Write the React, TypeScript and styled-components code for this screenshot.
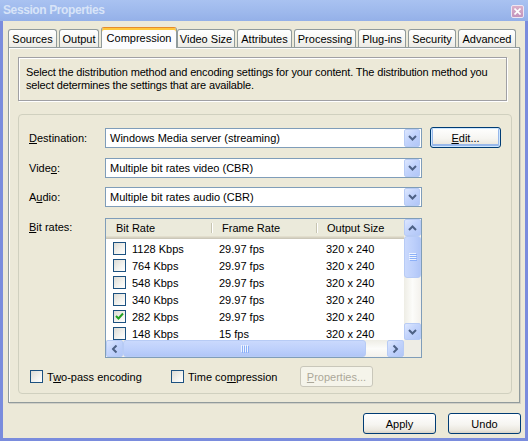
import styled, { createGlobalStyle } from "styled-components";

const GlobalStyle = createGlobalStyle`
  html, body {
    margin: 0;
    padding: 0;
  }
  body {
    font-family: "Liberation Sans", Arial, sans-serif;
    font-size: 11px;
    color: #000;
    background: #ece9d8;
  }
`;

const Window = styled.div`
  width: 528px;
  height: 441px;
  display: flex;
  flex-direction: column;
  background: #7a8cdd;
  overflow: hidden;
`;

const TitleBar = styled.div`
  height: 21px;
  flex: none;
  display: flex;
  align-items: center;
  justify-content: space-between;
  padding: 0 4px 0 3px;
  background: linear-gradient(180deg, #a9c2f1 0%, #9db8ec 60%, #94b0e8 100%);
`;

const Title = styled.span`
  color: #d8e4f8;
  font-weight: bold;
  font-size: 12px;
  letter-spacing: -0.4px;
  margin-top: -1px;
`;

const CloseBox = styled.div`
  width: 13px;
  height: 13px;
  box-sizing: border-box;
  margin-top: 1px;
  border: 1px solid #efe6f2;
  border-radius: 2px;
  background: linear-gradient(180deg, #dab0c9, #c394bd);
  display: flex;
  align-items: center;
  justify-content: center;
`;

const Body = styled.div`
  flex: 1;
  margin: 0 3px 3px;
  background: #ece9d8;
  padding: 6px 5px 0 5px;
  display: flex;
  flex-direction: column;
`;

const TabRow = styled.div`
  display: flex;
  height: 21px;
  position: relative;
  z-index: 1;
`;

const Tab = styled.div<{ $active?: boolean; $w: number }>`
  box-sizing: border-box;
  width: ${(p) => p.$w}px;
  height: ${(p) => (p.$active ? 21 : 18)}px;
  margin-top: ${(p) => (p.$active ? 0 : 2)}px;
  margin-right: ${(p) => (p.$active ? 0 : 2)}px;
  border: 1px solid #919b9c;
  border-bottom: none;
  border-top-color: ${(p) => (p.$active ? "#e68b2c" : "#919b9c")};
  border-radius: 3px 3px 0 0;
  background: ${(p) =>
    p.$active ? "#fcfcfe" : "linear-gradient(180deg, #ffffff 0%, #f7f7f4 50%, #ecebe6 100%)"};
  box-shadow: ${(p) => (p.$active ? "inset 0 2px 0 #ffc83c" : "none")};
  display: flex;
  align-items: center;
  justify-content: center;
  padding-top: ${(p) => (p.$active ? 0 : 1)}px;
  white-space: nowrap;
`;

const Panel = styled.div`
  margin-top: -1px;
  height: 356px;
  box-sizing: border-box;
  border: 1px solid #919b9c;
  box-shadow: inset 1px 1px 0 #fcfcfe, 1px 1px 0 #d0cfc6;
  padding: 9px 7px 0 9px;
`;

const DescBox = styled.div`
  height: 44px;
  box-sizing: border-box;
  margin-right: 5px;
  padding: 8px 7px;
  line-height: 13px;
  letter-spacing: -0.15px;
  white-space: nowrap;
  border: 1px solid #a0a0a4;
  box-shadow: inset 1px 1px 0 #ffffff, 1px 1px 0 #ffffff;
`;

const GroupBox = styled.div`
  margin-top: 13px;
  height: 280px;
  box-sizing: border-box;
  border: 1px solid #d0d0bf;
  border-radius: 4px;
  padding: 12px 10px 0;
`;

const FieldRow = styled.div<{ $top?: number }>`
  display: flex;
  align-items: center;
  height: ${(p) => (p.$top === undefined ? 21 : 20)}px;
  margin-top: ${(p) => p.$top ?? 0}px;
`;

const Label = styled.div<{ $pad?: number }>`
  width: 76px;
  flex: none;
  padding-top: ${(p) => p.$pad ?? 0}px;
`;

const Combo = styled.div`
  width: 317px;
  height: 20px;
  box-sizing: border-box;
  border: 1px solid #7f9db9;
  background: #fff;
  display: flex;
  align-items: center;
  padding: 0 1px 0 4px;
`;

const ComboText = styled.span`
  flex: 1;
`;

const ArrowBtn = styled.div<{ $w?: number; $h?: number }>`
  width: ${(p) => p.$w ?? 16}px;
  height: ${(p) => p.$h ?? 16}px;
  flex: none;
  box-sizing: border-box;
  border: 1px solid #b7cbf5;
  border-radius: 2px;
  background: linear-gradient(135deg, #dde7fe 0%, #c3d4fc 45%, #b1c6f7 100%);
  display: flex;
  align-items: center;
  justify-content: center;
`;

const XpButton = styled.div<{ $default?: boolean; $disabled?: boolean; $w: number }>`
  width: ${(p) => p.$w}px;
  height: 21px;
  box-sizing: border-box;
  flex: none;
  border: 1px solid ${(p) => (p.$disabled ? "#c9c7ba" : "#003c74")};
  border-radius: 3px;
  color: ${(p) => (p.$disabled ? "#aca899" : "#000")};
  background: ${(p) =>
    p.$disabled
      ? "#f5f4ea"
      : "linear-gradient(180deg, #ffffff 0%, #f6f5f1 55%, #ebe8df 85%, #d8d3c7 100%)"};
  box-shadow: ${(p) =>
    p.$default ? "inset 0 0 0 1px #cee7ff, inset 0 -1px 0 2px #98b8ea" : "none"};
  display: flex;
  align-items: center;
  justify-content: center;
  margin-left: ${(p) => (p.$default ? 8 : 0)}px;
`;

const ListRow = styled.div`
  display: flex;
  align-items: flex-start;
  margin-top: 11px;
`;

const ListBox = styled.div`
  width: 317px;
  height: 140px;
  box-sizing: border-box;
  border: 1px solid #7f9db9;
  background: #fff;
  display: grid;
  grid-template-columns: 298px 17px;
  grid-template-rows: 121px 17px;
`;

const ListContent = styled.div`
  overflow: hidden;
`;

const Columns = "106px 105px 87px";

const Header = styled.div`
  display: grid;
  grid-template-columns: ${Columns};
  height: 20px;
  box-sizing: border-box;
  background: #ebeadb;
  box-shadow: inset 0 -1px 0 #cbc7b8, inset 0 -2px 0 #d6d2c2, inset 0 -3px 0 #e2decd;
  margin-bottom: 1px;
`;

const HeadCell = styled.div<{ $last?: boolean }>`
  display: flex;
  align-items: center;
  padding: 0 0 2px 10px;
  position: relative;
  &::after {
    content: "";
    display: ${(p) => (p.$last ? "none" : "block")};
    position: absolute;
    right: 0;
    top: 4px;
    bottom: 6px;
    width: 1px;
    background: #c7c5b2;
    box-shadow: 1px 0 0 #fff;
  }
`;

const DataRow = styled.div`
  display: grid;
  grid-template-columns: ${Columns};
  height: 17px;
  align-items: center;
`;

const Cell = styled.div<{ $pad: number }>`
  display: flex;
  align-items: center;
  gap: 6px;
  padding-left: ${(p) => p.$pad}px;
  white-space: nowrap;
`;

const Check = styled.div`
  width: 13px;
  height: 13px;
  box-sizing: border-box;
  flex: none;
  border: 1px solid #1c5180;
  background: linear-gradient(135deg, #dcdbd5 0%, #f3f3ef 60%, #ffffff 100%);
  display: flex;
  align-items: center;
  justify-content: center;
`;

const VScroll = styled.div`
  display: flex;
  flex-direction: column;
  background: linear-gradient(90deg, #eeede5, #fcfcfa 50%, #f3f1ec);
`;

const HScroll = styled.div`
  display: flex;
  background: linear-gradient(180deg, #eeede5, #fcfcfa 50%, #f3f1ec);
`;

const Thumb = styled.div<{ $vertical?: boolean; $size: number }>`
  ${(p) => (p.$vertical ? `height: ${p.$size}px;` : `width: ${p.$size}px;`)}
  flex: none;
  box-sizing: border-box;
  border: 1px solid #b7cbf5;
  border-radius: 3px;
  background: ${(p) =>
    p.$vertical
      ? "linear-gradient(90deg, #cad9fd 0%, #bccffb 60%, #b1c6f7 100%)"
      : "linear-gradient(180deg, #cad9fd 0%, #bccffb 60%, #b1c6f7 100%)"};
  display: flex;
  align-items: center;
  justify-content: center;
`;

const Track = styled.div`
  flex: 1;
`;

const Corner = styled.div`
  background: #eeede5;
`;

const OptionRow = styled.div`
  display: flex;
  align-items: center;
  height: 21px;
  margin-top: 8px;
  padding-left: 1px;
`;

const Option = styled.label<{ $w: number }>`
  width: ${(p) => p.$w}px;
  flex: none;
  display: flex;
  align-items: center;
  gap: 4px;
  white-space: nowrap;
`;

const ButtonRow = styled.div`
  display: flex;
  justify-content: flex-end;
  gap: 12px;
  margin: 10px -1px 0 0;
`;

function Chevron({ dir }: { dir: "up" | "down" | "left" | "right" }) {
  const rot = { down: 0, up: 180, left: 90, right: -90 }[dir];
  return (
    <svg width="9" height="6" viewBox="0 0 9 6" style={{ transform: `rotate(${rot}deg)` }}>
      <path d="M1 1 L4.5 4.5 L8 1" fill="none" stroke="#4d6185" strokeWidth="2" />
    </svg>
  );
}

function Grip({ vertical }: { vertical?: boolean }) {
  const lines = [0, 2, 4, 6];
  return vertical ? (
    <svg width="8" height="8" viewBox="0 0 8 8">
      {lines.map((y) => (
        <line key={y} x1="0" y1={y + 0.5} x2="7" y2={y + 0.5} stroke="#eef4fe" />
      ))}
      {lines.map((y) => (
        <line key={"s" + y} x1="1" y1={y + 1.5} x2="8" y2={y + 1.5} stroke="#8cb0f8" />
      ))}
    </svg>
  ) : (
    <svg width="8" height="8" viewBox="0 0 8 8">
      {lines.map((x) => (
        <line key={x} x1={x + 0.5} y1="0" x2={x + 0.5} y2="7" stroke="#eef4fe" />
      ))}
      {lines.map((x) => (
        <line key={"s" + x} x1={x + 1.5} y1="1" x2={x + 1.5} y2="8" stroke="#8cb0f8" />
      ))}
    </svg>
  );
}

function CheckBox({ checked }: { checked?: boolean }) {
  return (
    <Check>
      {checked && (
        <svg width="9" height="9" viewBox="0 0 9 9">
          <path d="M1 4 L3.5 6.5 L8 1.5" fill="none" stroke="#21a121" strokeWidth="2" />
        </svg>
      )}
    </Check>
  );
}

const tabs = [
  { name: "Sources", w: 49 },
  { name: "Output", w: 40 },
  { name: "Compression", w: 76, active: true },
  { name: "Video Size", w: 58 },
  { name: "Attributes", w: 55 },
  { name: "Processing", w: 62 },
  { name: "Plug-ins", w: 48 },
  { name: "Security", w: 48 },
  { name: "Advanced", w: 58 },
];

const rates = [
  { rate: "1128 Kbps", fps: "29.97 fps" },
  { rate: "764 Kbps", fps: "29.97 fps" },
  { rate: "548 Kbps", fps: "29.97 fps" },
  { rate: "340 Kbps", fps: "29.97 fps" },
  { rate: "282 Kbps", fps: "29.97 fps", checked: true },
  { rate: "148 Kbps", fps: "15 fps" },
];

export default function App() {
  return (
    <>
      <GlobalStyle />
      <Window>
        <TitleBar>
          <Title>Session Properties</Title>
          <CloseBox>
            <svg width="7" height="7" viewBox="0 0 7 7">
              <path d="M0.5 0.5 L6.5 6.5 M6.5 0.5 L0.5 6.5" stroke="#fff" strokeWidth="1.6" />
            </svg>
          </CloseBox>
        </TitleBar>
        <Body>
          <TabRow>
            {tabs.map((t) => (
              <Tab key={t.name} $w={t.w} $active={t.active}>
                {t.name}
              </Tab>
            ))}
          </TabRow>
          <Panel>
            <DescBox>
              Select the distribution method and encoding settings for your content. The
              distribution method you
              <br />
              select determines the settings that are available.
            </DescBox>
            <GroupBox>
              <FieldRow>
                <Label>
                  <u>D</u>estination:
                </Label>
                <Combo>
                  <ComboText>Windows Media server (streaming)</ComboText>
                  <ArrowBtn $h={18}>
                    <Chevron dir="down" />
                  </ArrowBtn>
                </Combo>
                <XpButton $default $w={71}>
                  <span>
                    <u>E</u>dit...
                  </span>
                </XpButton>
              </FieldRow>
              <FieldRow $top={10}>
                <Label>
                  Vide<u>o</u>:
                </Label>
                <Combo>
                  <ComboText>Multiple bit rates video (CBR)</ComboText>
                  <ArrowBtn $h={18}>
                    <Chevron dir="down" />
                  </ArrowBtn>
                </Combo>
              </FieldRow>
              <FieldRow $top={9}>
                <Label>
                  A<u>u</u>dio:
                </Label>
                <Combo>
                  <ComboText>Multiple bit rates audio (CBR)</ComboText>
                  <ArrowBtn $h={18}>
                    <Chevron dir="down" />
                  </ArrowBtn>
                </Combo>
              </FieldRow>
              <ListRow>
                <Label $pad={3}>
                  <u>B</u>it rates:
                </Label>
                <ListBox>
                  <ListContent>
                    <Header>
                      <HeadCell>Bit Rate</HeadCell>
                      <HeadCell>Frame Rate</HeadCell>
                      <HeadCell $last>Output Size</HeadCell>
                    </Header>
                    {rates.map((r) => (
                      <DataRow key={r.rate}>
                        <Cell $pad={7}>
                          <CheckBox checked={r.checked} />
                          {r.rate}
                        </Cell>
                        <Cell $pad={7}>{r.fps}</Cell>
                        <Cell $pad={9}>320 x 240</Cell>
                      </DataRow>
                    ))}
                  </ListContent>
                  <VScroll>
                    <ArrowBtn $w={17} $h={17}>
                      <Chevron dir="up" />
                    </ArrowBtn>
                    <Thumb $vertical $size={42}>
                      <Grip vertical />
                    </Thumb>
                    <Track />
                    <ArrowBtn $w={17} $h={17}>
                      <Chevron dir="down" />
                    </ArrowBtn>
                  </VScroll>
                  <HScroll>
                    <ArrowBtn $w={17} $h={17}>
                      <Chevron dir="left" />
                    </ArrowBtn>
                    <Thumb $size={243}>
                      <Grip />
                    </Thumb>
                    <Track />
                    <ArrowBtn $w={17} $h={17}>
                      <Chevron dir="right" />
                    </ArrowBtn>
                  </HScroll>
                  <Corner />
                </ListBox>
              </ListRow>
              <OptionRow>
                <Option $w={141}>
                  <CheckBox />
                  <span>
                    T<u>w</u>o-pass encoding
                  </span>
                </Option>
                <Option $w={129}>
                  <CheckBox />
                  <span>
                    Time co<u>m</u>pression
                  </span>
                </Option>
                <XpButton $disabled $w={73}>
                  <span>
                    <u>P</u>roperties...
                  </span>
                </XpButton>
              </OptionRow>
            </GroupBox>
          </Panel>
          <ButtonRow>
            <XpButton $w={73}>Apply</XpButton>
            <XpButton $w={73}>Undo</XpButton>
          </ButtonRow>
        </Body>
      </Window>
    </>
  );
}
